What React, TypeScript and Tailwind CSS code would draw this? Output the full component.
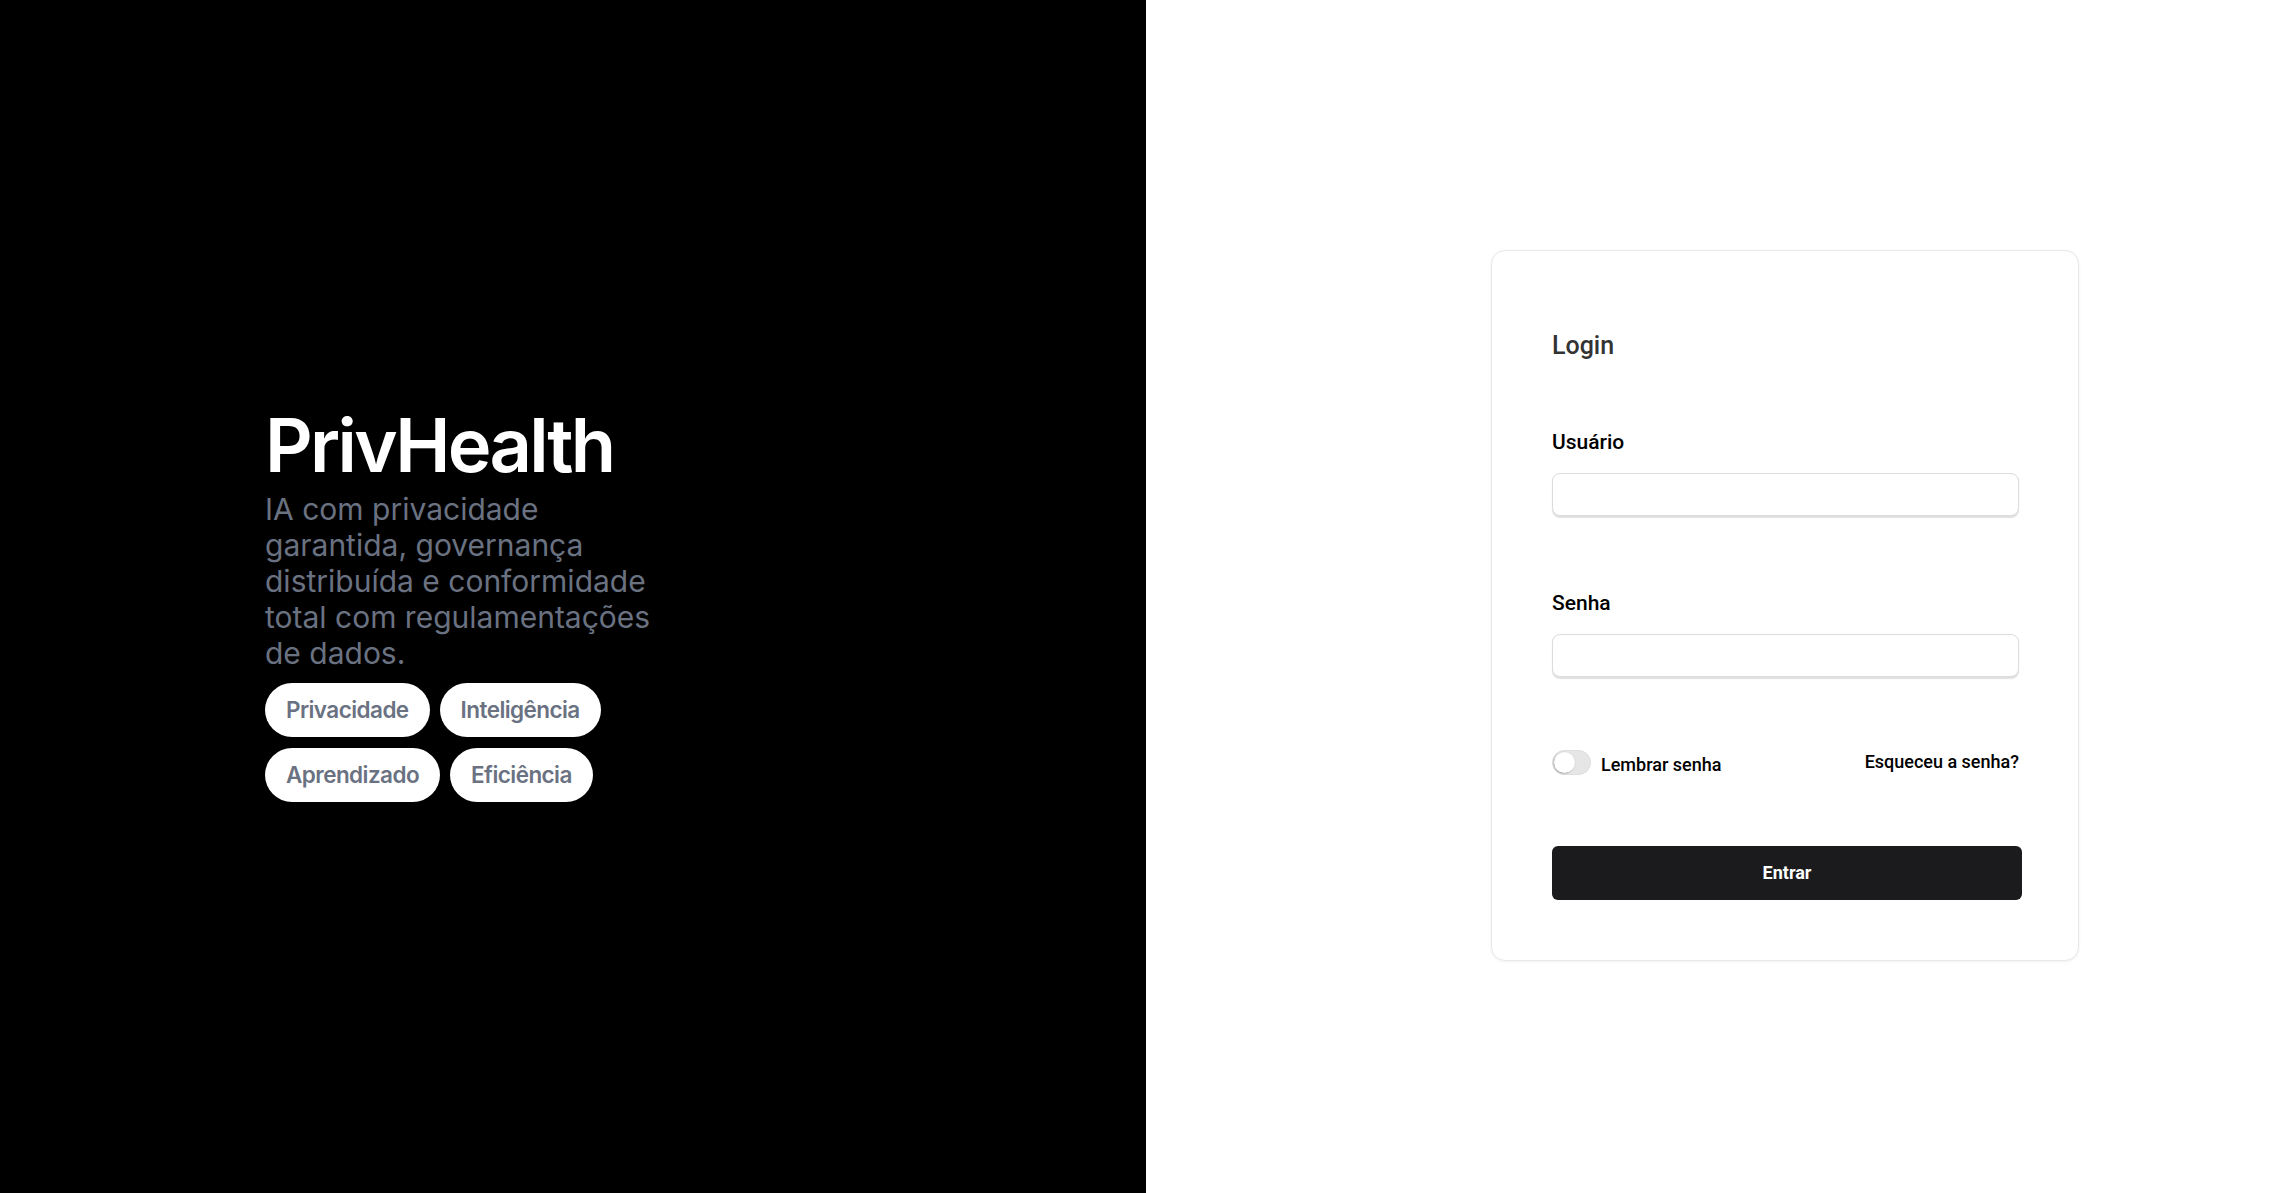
import { useState } from "react";

const chips = ["Privacidade", "Inteligência", "Aprendizado", "Eficiência"];

export default function App() {
  const [usuario, setUsuario] = useState("");
  const [senha, setSenha] = useState("");
  const [lembrar, setLembrar] = useState(false);

  return (
    <div className="flex h-[1193px] w-full">
      {/* ---------- brand side ---------- */}
      <div
        className="flex h-full w-[1146px] shrink-0 items-center bg-black pl-[265px] pt-[17px]"
        style={{ fontFamily: "Inter, 'Noto Sans', sans-serif" }}
      >
        <div className="flex w-[420px] flex-col">
          <h1 className="text-[74px] font-semibold leading-none tracking-[-0.036em] text-white">
            PrivHealth
          </h1>
          <p className="mt-[9px] max-w-[400px] text-3xl text-gray-500">
            IA com privacidade garantida, governança distribuída e conformidade
            total com regulamentações de dados.
          </p>
          <div className="mt-[12px] flex w-[400px] flex-wrap gap-x-[10px] gap-y-[11px]">
            {chips.map((c) => (
              <span
                key={c}
                className="rounded-full bg-white px-[21px] py-[11px] text-[22.5px] font-semibold leading-8 tracking-tight text-gray-500"
              >
                {c}
              </span>
            ))}
          </div>
        </div>
      </div>

      {/* ---------- login side ---------- */}
      <div
        className="flex h-full flex-1 items-center justify-end bg-white pr-[204px] pt-[17px]"
        style={{ fontFamily: "Roboto, 'Liberation Sans', sans-serif" }}
      >
        <div className="w-[588px] rounded-[14px] border border-[#e6e8eb] bg-white pb-[60px] pl-[60px] pr-[56px] pt-[79px] shadow-[0_1px_3px_rgba(0,0,0,0.06)]">
          <h2 className="text-[25px] font-medium leading-8 text-[#333333]">Login</h2>

          <form onSubmit={(e) => e.preventDefault()}>
            <label className="mt-[66px] block text-[21px] font-medium leading-7 text-black">
              Usuário
            </label>
            <input
              type="text"
              value={usuario}
              onChange={(e) => setUsuario(e.target.value)}
              className="mt-[17px] block h-[43px] w-[467px] rounded-lg border border-[#dcdcdc] bg-white px-3 text-lg shadow-[0_1.5px_1px_rgba(0,0,0,0.12)] outline-none"
            />

            <label className="mt-[73px] block text-[21px] font-medium leading-7 text-black">
              Senha
            </label>
            <input
              type="password"
              value={senha}
              onChange={(e) => setSenha(e.target.value)}
              className="mt-[17px] block h-[43px] w-[467px] rounded-lg border border-[#dcdcdc] bg-white px-3 text-lg shadow-[0_1.5px_1px_rgba(0,0,0,0.12)] outline-none"
            />

            {/* remember / forgot */}
            <div className="mt-[71px] flex w-[467px] items-center justify-between">
              <label className="flex cursor-pointer items-center">
                <button
                  type="button"
                  onClick={() => setLembrar((v) => !v)}
                  className={`relative h-[25px] w-[39px] rounded-full border border-[#dedede] ${
                    lembrar ? "bg-[#1b1b1d]" : "bg-[#e6e6e6]"
                  }`}
                >
                  <span
                    className={`absolute top-[1px] h-[21px] w-[21px] rounded-full bg-white shadow-[-0.5px_0.5px_1.5px_rgba(0,0,0,0.35)] ${
                      lembrar ? "left-[15px]" : "left-[1px]"
                    }`}
                  />
                </button>
                <span className="ml-[10px] pt-[5px] text-lg font-medium leading-6 text-black">
                  Lembrar senha
                </span>
              </label>
              <a href="#" className="text-lg font-medium leading-6 text-black">
                Esqueceu a senha?
              </a>
            </div>

            <button
              type="submit"
              className="mt-[69px] block h-[54px] w-full rounded-md bg-[#1b1b1d] text-lg font-bold text-white"
            >
              Entrar
            </button>
          </form>
        </div>
      </div>
    </div>
  );
}
